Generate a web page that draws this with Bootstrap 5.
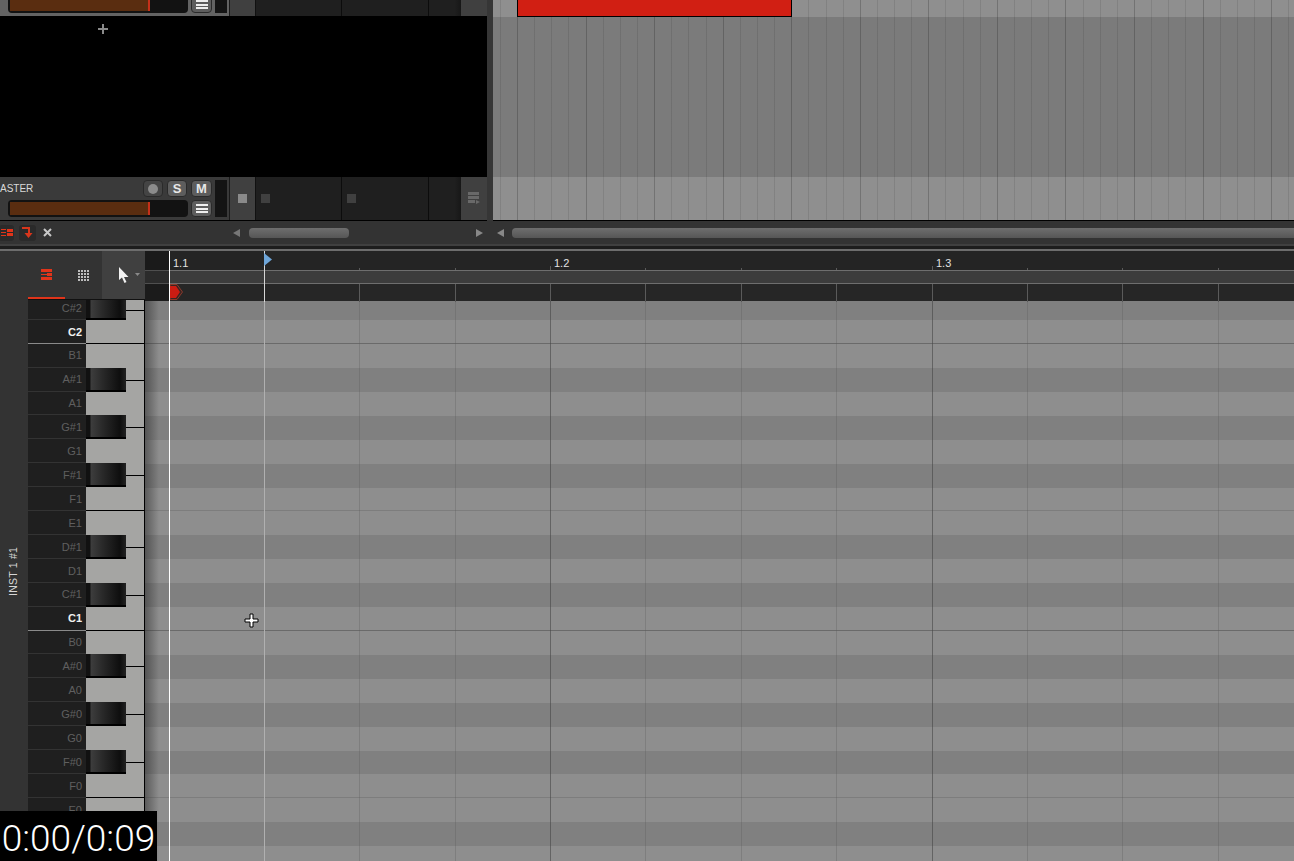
<!DOCTYPE html>
<html lang="en">

<head>
  <meta charset="UTF-8">
  <title>Piano Roll</title>
  <link href="https://cdn.jsdelivr.net/npm/bootstrap@5.3.2/dist/css/bootstrap.min.css" rel="stylesheet" />
  <style>
    html, body { height: 861px; overflow: hidden; }
    body { background: #333; font-family: "Liberation Sans", Arial, sans-serif; font-size: 11px; color: #ddd; position: relative; }

    /* top: mixer + arranger */
    .top-area { height: 221px; }
    .mixer { width: 487px; }
    .clip-row { height: 17px; }
    .add-zone { height: 160px; background: #000; }
    .add-plus { width: 108px; padding-top: 7px; }
    .track-row { height: 44px; width: 487px; flex: none; background: #3a3a3a; border-bottom: 1px solid #000; }
    .track-row.is-selected { background: #636363; }
    .strip { width: 229px; flex: none; padding: 3px 3px 3px 8px; gap: 3px; }
    .strip-main { width: 204px; }
    .strip-top { height: 17px; gap: 4px; }
    .strip-bottom { gap: 3px; }
    .track-name { margin-left: -8px; color: #d8d8d8; font-size: 10px; width: 139px; flex: none; white-space: nowrap; }
    .mix-btn { width: 20px; height: 17px; flex: none; padding: 0; border: 1px solid #2a2a2a; border-radius: 4px; background: #5d5d5d; color: #e8e8e8; font-size: 13px; font-weight: 700; line-height: 15px; }
    .mix-btn.is-wide { width: 21px; }
    .mix-btn.is-round { background: #444; }
    .rec-dot { width: 10px; height: 10px; border-radius: 50%; background: #8b8b8b; }
    .menu-lines { width: 12px; height: 9px; margin-top: 3px; border-top: 2px solid #eee; border-bottom: 2px solid #eee; position: relative; }
    .menu-lines::after { content: ""; position: absolute; left: 0; right: 0; top: 1.5px; height: 2px; background: #eee; }
    .fader { width: 180px; height: 17px; flex: none; padding: 2px; background: #121212; border-radius: 4px; }
    .fader-fill { width: 140px; height: 13px; background: #5a2d10; border-right: 2px solid #c5301a; }
    .meter { width: 12px; height: 37px; flex: none; background: #141414; }
    .slot-col { width: 27px; flex: none; background: #404040; border-left: 1px solid #1a1a1a; border-right: 1px solid #111; }
    .slot-sq { width: 9px; height: 9px; background: #8a8a8a; }
    .slot-dark { width: 86px; flex: none; background: #1f1f1f; border-right: 1px solid #0c0c0c; padding-left: 5px; }
    .slot-dark.is-wide { width: 87px; }
    .slot-dark.last { width: 32px; background: linear-gradient(90deg, #1f1f1f 80%, #171717); border-right: 0; }
    .slot-dark .slot-sq { background: #404040; }
    .slot-end { width: 26px; flex: none; background: #404040; }
    .gutter { width: 6px; background: #363636; }
    .arrange { background: #000; }
    .lane { background-color: #8f8f8f; background-image:
      repeating-linear-gradient(90deg, transparent 24px, #737373 24px 25px, transparent 25px 92.55px),
      repeating-linear-gradient(90deg, transparent 6.86px, rgba(90,90,90,.25) 6.86px 7.86px, transparent 7.86px 24px); }
    .lane-top { height: 17px; }
    .lane-mid { height: 160px; background-color: #7b7b7b; background-image:
      repeating-linear-gradient(90deg, transparent 24px, #636363 24px 25px, transparent 25px 92.55px),
      repeating-linear-gradient(90deg, transparent 6.86px, rgba(85,85,85,.3) 6.86px 7.86px, transparent 7.86px 24px); }
    .lane-end { height: 43px; }
    .clip-red { left: 24px; top: 0; width: 275px; height: 17px; background: #d11f13; border: 1px solid #000; border-top: 0; }

    /* scroll bar strip */
    .tool-strip { height: 23px; background: #333; }
    .tool-icon { width: 15px; height: 16px; background: #2a2a2a; border-radius: 3px; flex: none; }
    .tool-icon.first { margin-left: -1px; margin-right: 5px; }
    .tool-icon.second { width: 17px; }
    .tool-close { margin-left: 7px; margin-right: 181px; }
    .thumb { height: 10px; border-radius: 4px; background: linear-gradient(#6e6e6e, #565656); flex: none; }
    .thumb-a { width: 100px; margin-left: 8px; margin-right: 126px; }
    .thumb-b { flex: 1 1 auto; margin-left: 7px; border-radius: 4px 0 0 4px; }
    .gap-arrows { margin-left: 14px; }
    .split-line { height: 7px; background: linear-gradient(#404040 0 2px, #1d1d1d 2px 5px, #6d6d6d 5px); }

    /* piano roll */
    .roll { height: 610px; }
    .inst-tab { width: 28px; background: #333; }
    .inst-name { writing-mode: vertical-rl; transform: rotate(180deg); color: #d6d6d6; font-size: 10.5px; letter-spacing: .2px; margin-top: 296px; white-space: nowrap; }
    .key-col { width: 117px; background: #000; }
    .key-tools { height: 49px; background: #333; border-bottom: 1px solid #111; }
    .tool-tab { width: 37px; }
    .tool-tab.is-on { border-bottom: 2px solid #e0341a; }
    .tool-pick { width: 43px; background: #404040; gap: 6px; padding-right: 5px; padding-bottom: 1px; }
    .key-stack { height: 561px; }
    .key-row { height: 23.92px; }
    .key-row:first-child { height: 19.8px; }
    .key-name { width: 58px; background: #1f1f1f; border-bottom: 1px solid #333; padding-right: 4px; color: #5f5f5f; font-size: 11px; padding-top: 1px; }
    .key-row:first-child .key-name { padding-top: 1px; align-items: start !important; line-height: 15px; }
    .key-name.is-c { color: #f0f0f0; font-weight: 700; border-bottom-color: #8a8a8a; }
    .key-white { width: 58px; background: #a5a5a3; position: relative; }
    .key-white.has-edge { border-bottom: 1px solid #000; }
    .key-black { width: 40px; background: linear-gradient(90deg, #111 0 4px, #3d3d3d 5px, #2a2a2a 40%, #0e0e0e 85%, #222); border-bottom: 2px solid #000; }
    .key-white.is-sharp::after { content: ""; position: absolute; left: 40px; right: 0; top: 50%; height: 1px; background: #000; }
    .key-white.is-sharp { background: linear-gradient(90deg, #111 40px, #a5a5a3 40px); }

    .grid-col { min-width: 0; background: #888; }
    .ruler { height: 50px; background: #242424; }
    .ruler-top { height: 19px; }
    .ruler-mid { height: 14px; background: #3c3c3c; border-top: 1px solid #6e6e6e; border-bottom: 1px solid #6e6e6e; }
    .ruler-low { height: 17px; background: #262626; }
    .ruler-num { top: 6px; color: #e2e2e2; font-size: 11px; line-height: 13px; }
    .grid-rows { height: 560px; }
    .grid-row { height: 23.92px; background: #8e8e8e; }
    .grid-row:first-child { height: 19.2px; }
    .grid-row.is-black { background: #808080; }
    .grid-row.is-octave { border-bottom: 1px solid #6a6a6a; }
    .grid-row.is-fifth { border-bottom: 1px solid #7d7d7d; }
    .beat-low { width: 1px; top: 33px; height: 18px; background: #5a5a5a; }
    .beat-tick { width: 1px; top: 17px; height: 2px; background: #5a5a5a; }
    .beat-tick.is-bar { top: 15px; height: 4px; }
    .beat-line { width: 1px; top: 51px; bottom: 0; background: rgba(90,90,90,.3); }
    .beat-line.is-bar { background: rgba(70,70,70,.6); }
    .ruler-shadow { left: 0; width: 24px; top: 0; height: 50px; background: rgba(0,0,0,.28); }
    .grid-shadow { left: 0; width: 14px; top: 50px; bottom: 0; background: linear-gradient(90deg, rgba(40,40,40,.5), rgba(40,40,40,0)); }
    .play-line { width: 1px; top: 0; bottom: 0; }
    .play-start { left: 24px; background: #fff; }
    .play-head { left: 119px; background: #d6d6d6; }
    .marker { position: absolute; }
    .timecode { left: 0; bottom: 0; width: 157px; height: 50px; background: #000; color: #fff; font-family: Roboto, "Liberation Sans", sans-serif; font-weight: 300; font-size: 37px; line-height: 56px; text-align: center; white-space: nowrap; overflow: hidden; }
  </style>
</head>

<body>
  <div class="top-area d-flex">
    <div class="mixer d-flex flex-column">
      <div class="clip-row d-flex flex-column justify-content-end overflow-hidden">
        <div class="track-row is-selected d-flex">
          <div class="strip d-flex">
            <div class="strip-main d-flex flex-column justify-content-end">
              <div class="strip-bottom d-flex">
                <div class="fader"><div class="fader-fill"></div></div>
                <button class="btn mix-btn is-wide d-flex justify-content-center"><div class="menu-lines"></div></button>
              </div>
            </div>
            <div class="meter"></div>
          </div>
          <div class="slot-col"></div>
          <div class="slot-dark"></div>
          <div class="slot-dark is-wide"></div>
          <div class="slot-dark last"></div>
          <div class="slot-end"></div>
        </div>
      </div>
      <div class="add-zone">
        <div class="add-plus">
          <svg width="10" height="10" viewBox="0 0 10 10" class="d-block ms-auto"><path d="M4 0h2v4h4v2H6v4H4V6H0V4h4z" fill="#8a8a8a"/></svg>
        </div>
      </div>
      <div class="track-row d-flex">
        <div class="strip d-flex">
          <div class="strip-main d-flex flex-column justify-content-between">
            <div class="strip-top d-flex align-items-center">
              <span class="track-name">ASTER</span>
              <button class="btn mix-btn is-round d-flex align-items-center justify-content-center"><span class="rec-dot"></span></button>
              <button class="btn mix-btn">S</button>
              <button class="btn mix-btn is-wide">M</button>
            </div>
            <div class="strip-bottom d-flex">
              <div class="fader"><div class="fader-fill"></div></div>
              <button class="btn mix-btn is-wide d-flex justify-content-center"><div class="menu-lines"></div></button>
            </div>
          </div>
          <div class="meter"></div>
        </div>
        <div class="slot-col d-flex align-items-center justify-content-center"><span class="slot-sq"></span></div>
        <div class="slot-dark d-flex align-items-center"><span class="slot-sq"></span></div>
        <div class="slot-dark is-wide d-flex align-items-center"><span class="slot-sq"></span></div>
        <div class="slot-dark last"></div>
        <div class="slot-end d-flex align-items-center justify-content-center">
          <svg width="14" height="14" viewBox="0 0 14 14" fill="#696969"><path d="M1 0h11v3H1zM1 4h11v3H1zM1 8h7v3H1zM9 8l4 2-4 2z"/></svg>
        </div>
      </div>
    </div>
    <div class="gutter"></div>
    <div class="arrange flex-grow-1 position-relative">
      <div class="lane lane-top"></div>
      <div class="lane lane-mid"></div>
      <div class="lane lane-end"></div>
      <div class="clip-red position-absolute"></div>
    </div>
  </div>

  <div class="tool-strip d-flex align-items-center">
    <div class="tool-icon first d-flex align-items-center justify-content-center">
      <svg width="12" height="8" viewBox="0 0 12 8" fill="#e0341a"><path d="M0 0h5v1H0zM0 3h5v1H0zM0 6h5v1H0zM6 0h6v3H6zM6 4h6v3H6z"/></svg>
    </div>
    <div class="tool-icon second d-flex align-items-center justify-content-center">
      <svg width="11" height="11" viewBox="0 0 11 11" fill="#d8361c"><path d="M0 0h8v6h2.500L6.500 11l-4-5H6V2H0z"/></svg>
    </div>
    <div class="tool-close">
      <svg width="9" height="9" viewBox="0 0 9 9" class="d-block"><path d="M1 1l7 7M8 1L1 8" stroke="#c8c8c8" stroke-width="2"/></svg>
    </div>
    <svg width="8" height="8" viewBox="0 0 8 8" class="flex-shrink-0"><path d="M7 0v8L0 4z" fill="#777"/></svg>
    <div class="thumb thumb-a"></div>
    <svg width="8" height="8" viewBox="0 0 8 8" class="flex-shrink-0"><path d="M1 0v8l7-4z" fill="#888"/></svg>
    <svg width="8" height="8" viewBox="0 0 8 8" class="flex-shrink-0 gap-arrows"><path d="M7 0v8L0 4z" fill="#888"/></svg>
    <div class="thumb thumb-b"></div>
  </div>
  <div class="split-line"></div>

  <div class="roll d-flex">
    <div class="inst-tab d-flex justify-content-center align-items-start"><span class="inst-name">INST 1 #1</span></div>
    <div class="key-col d-flex flex-column">
      <div class="key-tools d-flex">
        <div class="tool-tab is-on d-flex align-items-center justify-content-center">
          <svg width="11" height="11" viewBox="0 0 11 11" fill="#e0341a"><path d="M0 0h11v3H0zM0 5h6v1H0zM6 4h5v3H6zM0 8h11v3H0z"/></svg>
        </div>
        <div class="tool-tab d-flex align-items-center justify-content-center">
          <svg width="11" height="11" viewBox="0 0 11 11" fill="#bdbdbd"><path d="M0 0h2v2H0zM3 0h2v2H3zM6 0h2v2H6zM9 0h2v2H9zM0 3h2v2H0zM3 3h2v2H3zM6 3h2v2H6zM9 3h2v2H9zM0 6h2v2H0zM3 6h2v2H3zM6 6h2v2H6zM9 6h2v2H9zM0 9h2v2H0zM3 9h2v2H3zM6 9h2v2H6zM9 9h2v2H9z"/></svg>
        </div>
        <div class="tool-pick d-flex align-items-center justify-content-end">
          <svg width="10" height="16" viewBox="0 0 10 16"><path d="M0 0v13l3-2.500 2.500 5.500 2-1-2.500-5h4.500z" fill="#f2f2f2"/></svg>
          <svg width="5" height="3" viewBox="0 0 5 3"><path d="M0 0h5L2.500 3z" fill="#8a8a8a"/></svg>
        </div>
      </div>
      <div id="keys" class="key-stack overflow-hidden"></div>
    </div>
    <div id="grid" class="grid-col flex-grow-1 position-relative">
      <div class="ruler d-flex flex-column">
        <div class="ruler-top"></div>
        <div class="ruler-mid"></div>
        <div class="ruler-low"></div>
      </div>
      <div class="ruler-shadow position-absolute"></div>
      <span class="ruler-num position-absolute" style="left:28px">1.1</span>
      <span class="ruler-num position-absolute" style="left:409px">1.2</span>
      <span class="ruler-num position-absolute" style="left:791px">1.3</span>
      <div id="rows" class="grid-rows overflow-hidden"></div>
      <div class="grid-shadow position-absolute"></div>
      <div class="play-line play-start position-absolute"></div>
      <div class="play-line play-head position-absolute"></div>
      <svg class="marker" style="left:119px;top:2px" width="9" height="13" viewBox="0 0 9 13"><path d="M0 0l8 6.500L0 13z" fill="#6ea5d8"/></svg>
      <svg class="marker" style="left:25px;top:33px" width="13" height="16" viewBox="0 0 13 16"><path d="M0 .5h7l5.500 7.500L7 15.500H0z" fill="#3a2422" stroke="#8a3a2c"/><path d="M0 2h6l4 6-4 6H0z" fill="#cc1c12"/></svg>
      <svg class="marker" style="left:99px;top:362px" width="15" height="15" viewBox="0 0 15 15"><path d="M6 1h3v5h5v3H9v5H6V9H1V6h5z" fill="#fff" stroke="#000"/></svg>
    </div>
  </div>

  <div class="timecode position-absolute">0:00/0:09</div>

  <script>
    const notes = ['C#2', 'C2', 'B1', 'A#1', 'A1', 'G#1', 'G1', 'F#1', 'F1', 'E1', 'D#1', 'D1', 'C#1', 'C1', 'B0', 'A#0', 'A0', 'G#0', 'G0', 'F#0', 'F0', 'E0', 'D#0', 'D0'];
    const keysVisible = 22; // the rest sit behind the timecode box
    const keys = document.getElementById('keys');
    const rows = document.getElementById('rows');
    const grid = document.getElementById('grid');

    notes.forEach((n, i) => {
      const sharp = n.includes('#');
      const octave = n.startsWith('C') && !sharp;
      const fifth = n.startsWith('F') && !sharp;

      if (i < keysVisible) {
        const row = document.createElement('div');
        row.className = 'key-row d-flex';
        row.innerHTML = `<div class="key-name d-flex align-items-center justify-content-end${octave ? ' is-c' : ''}">${n}</div>` +
          `<div class="key-white${sharp ? ' is-sharp' : ''}${octave || fifth ? ' has-edge' : ''}">` +
          (sharp ? '<div class="key-black h-100"></div>' : '') + '</div>';
        keys.appendChild(row);
      }

      const lane = document.createElement('div');
      lane.className = 'grid-row' + (sharp ? ' is-black' : '') + (octave ? ' is-octave' : '') + (fifth ? ' is-fifth' : '');
      rows.appendChild(lane);
    });

    // beat lines, 95.37px apart from the 1.1 start, every 4th is a bar
    for (let b = 1; b <= 11; b++) {
      const left = Math.floor(24.1 + 95.37 * b);
      const bar = b % 4 === 0 ? ' is-bar' : '';
      if (b > 1) {
        grid.insertAdjacentHTML('beforeend',
          `<div class="beat-tick${bar} position-absolute" style="left:${left}px"></div>` +
          `<div class="beat-low position-absolute" style="left:${left}px"></div>`);
      }
      grid.insertAdjacentHTML('beforeend', `<div class="beat-line${bar} position-absolute" style="left:${left}px"></div>`);
    }
  </script>
  <script src="https://cdn.jsdelivr.net/npm/bootstrap@5.3.2/dist/js/bootstrap.bundle.min.js"></script>
</body>

</html>
